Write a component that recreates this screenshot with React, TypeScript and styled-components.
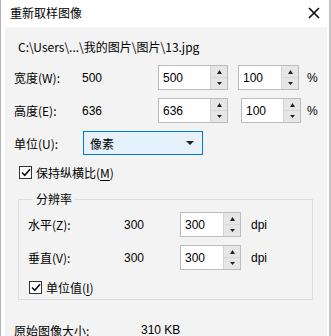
import React from "react";
import styled, { createGlobalStyle } from "styled-components";

const Global = createGlobalStyle`
  html, body { margin: 0; padding: 0; background: #ffffff; }
  body { font-family: "Noto Sans CJK SC", "Noto Sans", sans-serif; font-size: 12px; color: #000; }
`;

const Window = styled.div`
  width: 331px;
  height: 336px;
  overflow: hidden;
  background: #ffffff;
  border-left: 1px solid #b5b5b5;
  border-right: 2px solid #c4c4c4;
  box-sizing: border-box;
  display: flex;
  flex-direction: column;
`;

const TitleBar = styled.div`
  height: 27px;
  display: flex;
  align-items: center;
  justify-content: space-between;
  padding: 0 9px 0 9px;
  flex-shrink: 0;
`;

const Title = styled.span`
  font-size: 12px;
  line-height: 1;
  margin-top: -1px;
`;

const Close = styled.svg`
  width: 12px;
  height: 12px;
  margin-top: -1px;
`;

const Panel = styled.div`
  flex: 1;
  margin: 0 2px 0 4px;
  background: #f3f3f3;
  padding: 12px 0 0 9px;
  display: flex;
  flex-direction: column;
`;

const PathLine = styled.div`
  height: 16px;
  line-height: 16px;
  padding-left: 4px;
  margin-bottom: 10px;
`;

const Row = styled.div<{ $h?: number; $mb?: number }>`
  display: flex;
  align-items: center;
  height: ${(p) => p.$h ?? 25}px;
  margin-bottom: ${(p) => p.$mb ?? 8}px;
  flex-shrink: 0;
`;

const Label = styled.span<{ $w: number }>`
  width: ${(p) => p.$w}px;
  flex-shrink: 0;
`;

const Value = styled.span<{ $w: number }>`
  width: ${(p) => p.$w}px;
  flex-shrink: 0;
  font-family: "Liberation Sans", Arial, sans-serif;
  font-size: 12px;
`;

const SpinBox = styled.div<{ $w: number; $ml?: number }>`
  width: ${(p) => p.$w}px;
  height: 25px;
  margin-left: ${(p) => p.$ml ?? 0}px;
  box-sizing: border-box;
  border: 1px solid #bcbcbc;
  background: #fff;
  display: flex;
  flex-shrink: 0;
`;

const SpinText = styled.div`
  flex: 1;
  display: flex;
  align-items: center;
  padding-left: 4px;
  font-family: "Liberation Sans", Arial, sans-serif;
  font-size: 12px;
  padding-top: 1px;
`;

const SpinButtons = styled.div`
  width: 16px;
  border-left: 1px solid #d4d4d4;
  background: #e6e6e6;
  display: flex;
  flex-direction: column;
`;

const SpinBtn = styled.div<{ $down?: boolean }>`
  flex: 1;
  display: flex;
  align-items: center;
  justify-content: center;
  border-top: ${(p) => (p.$down ? "1px solid #d9d9d9" : "none")};
`;

const Unit = styled.span<{ $ml: number }>`
  margin-left: ${(p) => p.$ml}px;
  font-family: "Liberation Sans", Arial, sans-serif;
  font-size: 12px;
`;

const Select = styled.div`
  width: 120px;
  height: 24px;
  box-sizing: border-box;
  border: 1px solid #0078d7;
  background: #e5f1fb;
  display: flex;
  align-items: center;
  justify-content: space-between;
  padding: 0 8px 0 6px;
`;

const CheckRow = styled.div<{ $ml: number; $mb: number }>`
  display: flex;
  align-items: center;
  gap: 4px;
  margin-left: ${(p) => p.$ml}px;
  margin-bottom: ${(p) => p.$mb}px;
  height: 14px;
  flex-shrink: 0;
`;

const Box = styled.div`
  width: 13px;
  height: 13px;
  box-sizing: border-box;
  border: 1px solid #333;
  background: #fff;
  display: flex;
  align-items: center;
  justify-content: center;
`;

const U = styled.span`
  text-decoration: underline;
  text-underline-offset: 2px;
`;

const Group = styled.fieldset`
  margin: 0 14px 22px 4px;
  padding: 6px 0 0 9px;
  border: 1px solid #dcdcdc;
  height: 108px;
  box-sizing: border-box;
  flex-shrink: 0;
`;

const Legend = styled.legend`
  padding: 0 3px;
  margin-left: 5px;
  font-size: 12px;
  line-height: 14px;
`;

const Up = () => (
  <svg width="5" height="4" viewBox="0 0 5 4"><path d="M2.5 0 L5 4 L0 4 Z" fill="#222" /></svg>
);
const Down = () => (
  <svg width="5" height="3" viewBox="0 0 5 3"><path d="M0 0 L5 0 L2.5 3 Z" fill="#222" /></svg>
);

const Spinner: React.FC<{ value: string; w: number; ml?: number }> = ({ value, w, ml }) => (
  <SpinBox $w={w} $ml={ml}>
    <SpinText>{value}</SpinText>
    <SpinButtons>
      <SpinBtn><Up /></SpinBtn>
      <SpinBtn $down><Down /></SpinBtn>
    </SpinButtons>
  </SpinBox>
);

const Check = () => (
  <Box>
    <svg width="10" height="9" viewBox="0 0 10 9">
      <path d="M1 4.5 L3.8 7.3 L9 1.2" fill="none" stroke="#111" strokeWidth="1.6" />
    </svg>
  </Box>
);

export default function App() {
  return (
    <>
      <Global />
      <Window>
        <TitleBar>
          <Title>重新取样图像</Title>
          <Close viewBox="0 0 12 12">
            <path d="M1 1 L11 11 M11 1 L1 11" stroke="#111" strokeWidth="1.7" />
          </Close>
        </TitleBar>
        <Panel>
          <PathLine>C:\Users\...\我的图片\图片\13.jpg</PathLine>
          <Row>
            <Label $w={68}>宽度(W):</Label>
            <Value $w={76}>500</Value>
            <Spinner value="500" w={70} />
            <Spinner value="100" w={61} ml={10} />
            <Unit $ml={8}>%</Unit>
          </Row>
          <Row $mb={8}>
            <Label $w={68}>高度(E):</Label>
            <Value $w={76}>636</Value>
            <Spinner value="636" w={70} />
            <Spinner value="100" w={60} ml={13} />
            <Unit $ml={6}>%</Unit>
          </Row>
          <Row $h={24} $mb={10}>
            <Label $w={69}>单位(U):</Label>
            <Select>
              <span>像素</span>
              <svg width="8" height="4" viewBox="0 0 8 4"><path d="M0 0 L8 0 L4 4 Z" fill="#222" /></svg>
            </Select>
          </Row>
          <CheckRow $ml={5} $mb={13}>
            <Check />
            <span>保持纵横比(<U>M</U>)</span>
          </CheckRow>
          <Group>
            <Legend>分辨率</Legend>
            <Row>
              <Label $w={96}>水平(Z):</Label>
              <Value $w={56}>300</Value>
              <Spinner value="300" w={61} />
              <Unit $ml={10}>dpi</Unit>
            </Row>
            <Row $mb={10}>
              <Label $w={96}>垂直(V):</Label>
              <Value $w={56}>300</Value>
              <Spinner value="300" w={61} />
              <Unit $ml={10}>dpi</Unit>
            </Row>
            <CheckRow $ml={1} $mb={0}>
              <Check />
              <span>单位值(<U>I</U>)</span>
            </CheckRow>
          </Group>
          <Row $h={16} $mb={0}>
            <Label $w={127}>原始图像大小:</Label>
            <Value $w={80}>310 KB</Value>
          </Row>
        </Panel>
      </Window>
    </>
  );
}
